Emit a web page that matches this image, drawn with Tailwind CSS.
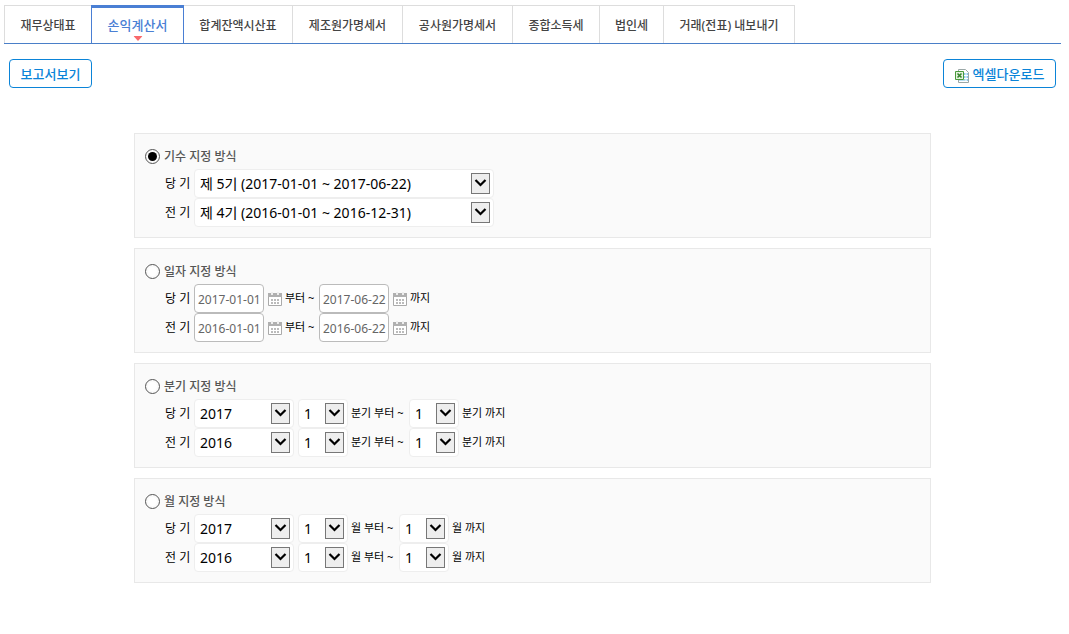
<!DOCTYPE html>
<html lang="ko">
<head>
    <meta charset="UTF-8">
    <meta name="viewport" content="width=device-width, initial-scale=1.0">
    <title>손익계산서</title>
    <script src="https://cdn.jsdelivr.net/npm/@tailwindcss/browser@4"></script>
</head>
<body class="bg-white pt-[5px] pl-1 pr-2 font-['Noto_Sans','Noto_Sans_CJK_KR',sans-serif] text-xs text-black">
    <svg class="hidden">
        <symbol id="arrow" viewBox="0 0 17 19">
            <path d="M3.5 6 L8.5 11 L13.5 6" fill="none" stroke="#000" stroke-width="2.2"/>
        </symbol>
        <symbol id="calendar" viewBox="0 0 14 14">
            <path d="M.5 1.5h13v12H.5z" fill="#fff" stroke="#aaa"/>
            <path d="M0 1h14v4H0z" fill="#b0b0b0"/>
            <path d="M3 0h2v3H3zM9 0h2v3H9z" fill="#eee"/>
            <path d="M3 7h2v2H3zM6 7h2v2H6zM9 7h2v2H9zM3 10h2v2H3zM6 10h2v2H6zM9 10h2v2H9z" fill="#bbb"/>
        </symbol>
    </svg>

    <!-- Tabs -->
    <nav class="flex h-[39px] border-b border-[#4a7fc8] font-medium text-[#444] whitespace-nowrap">
        <a href="#" class="flex w-[87px] items-center justify-center border-t border-l border-[#ddd] pt-0.5">재무상태표</a>
        <a href="#" class="relative flex w-[93px] items-center justify-center border-x border-t-3 border-[#4a7fd4] text-[13px] text-[#4a7fd4]">손익계산서
            <svg class="absolute bottom-[2px] left-1/2 -translate-x-1/2" width="9" height="5" viewBox="0 0 9 5"><path d="M0 0h9L4.5 5z" fill="#f9696b"/></svg>
        </a>
        <a href="#" class="flex w-[109px] items-center justify-center border-t border-r border-[#ddd] pt-0.5">합계잔액시산표</a>
        <a href="#" class="flex w-[110px] items-center justify-center border-t border-r border-[#ddd] pt-0.5">제조원가명세서</a>
        <a href="#" class="flex w-[110px] items-center justify-center border-t border-r border-[#ddd] pt-0.5">공사원가명세서</a>
        <a href="#" class="flex w-[87px] items-center justify-center border-t border-r border-[#ddd] pt-0.5">종합소득세</a>
        <a href="#" class="flex w-16 items-center justify-center border-t border-r border-[#ddd] pt-0.5">법인세</a>
        <a href="#" class="flex w-[131px] items-center justify-center border-t border-r border-[#ddd] pt-0.5">거래(전표) 내보내기</a>
    </nav>

    <!-- Buttons -->
    <div class="flex justify-between px-[5px] pt-[15px] text-[13px] font-medium text-[#0b84d8]">
        <button class="h-[29px] w-[83px] rounded border border-[#0b84d8] pt-0.5">보고서보기</button>
        <button class="flex h-[29px] w-[113px] items-center justify-center gap-1 rounded border border-[#0b84d8] pt-0.5">
            <svg class="mt-0.5" width="14" height="14" viewBox="0 0 14 14">
                <path d="M3.5.5h7l3 3v10h-10z" fill="#fff" stroke="#9aa7a7"/>
                <path d="M9 4h4v8H9z" fill="#8cc8ea"/>
                <path d="M4 12h8V11H4z" fill="#b9dff0"/>
                <path d="M9 6.5h4M9 9.5h4M11 4v8" stroke="#fff"/>
                <path d="M.5 2.5h8v8h-8z" fill="#e4f2dc" stroke="#4a9a3c"/>
                <path d="M2.5 4.5l4 4M6.5 4.5l-4 4" stroke="#35832b" stroke-width="1.6"/>
            </svg>
            엑셀다운로드
        </button>
    </div>

    <form class="mx-auto mt-[45px] flex max-w-[797px] flex-col gap-[10px]">
        <!-- 기수 -->
        <section class="border border-[#e8e8e8] bg-[#fafafa] p-[10px]">
            <label class="flex h-[25px] items-center gap-1 font-medium text-[#555]">
                <input type="radio" name="method" checked class="size-[15px] appearance-none rounded-full border border-[#555] bg-white bg-clip-content p-[2px] checked:bg-black">기수 지정 방식
            </label>
            <div class="flex h-[29px] items-center pl-5">
                <label for="term1" class="w-[29px]">당 기</label>
                <span class="relative flex">
                    <select id="term1" class="h-[29px] w-[300px] appearance-none rounded border border-[#eee] bg-white pl-[5px] text-sm"><option>제 5기 (2017-01-01 ~ 2017-06-22)</option></select>
                    <svg class="pointer-events-none absolute top-1 right-1 h-[21px] w-[19px] border border-[#777] bg-[#eee]"><use href="#arrow"/></svg>
                </span>
            </div>
            <div class="flex h-[29px] items-center pl-5">
                <label for="term2" class="w-[29px]">전 기</label>
                <span class="relative flex">
                    <select id="term2" class="h-[29px] w-[300px] appearance-none rounded border border-[#eee] bg-white pl-[5px] text-sm"><option>제 4기 (2016-01-01 ~ 2016-12-31)</option></select>
                    <svg class="pointer-events-none absolute top-1 right-1 h-[21px] w-[19px] border border-[#777] bg-[#eee]"><use href="#arrow"/></svg>
                </span>
            </div>
        </section>

        <!-- 일자 -->
        <section class="border border-[#e8e8e8] bg-[#fafafa] p-[10px]">
            <label class="flex h-[25px] items-center gap-1 font-medium text-[#555]">
                <input type="radio" name="method" class="size-[15px] appearance-none rounded-full border border-[#555] bg-white bg-clip-content p-[2px] checked:bg-black">일자 지정 방식
            </label>
            <div class="flex h-[29px] items-center pl-5">
                <label for="from1" class="w-[29px]">당 기</label>
                <input id="from1" type="text" value="2017-01-01" class="h-[29px] w-[70px] rounded border border-[#bbb] bg-white pt-0.5 pl-[3px] text-[#666]">
                <button type="button" aria-label="달력" class="mr-[3px] ml-1"><svg width="14" height="14"><use href="#calendar"/></svg></button>
                <label for="to1" class="w-[34px] text-[11px]">부터 ~</label>
                <input id="to1" type="text" value="2017-06-22" class="h-[29px] w-[70px] rounded border border-[#bbb] bg-white pt-0.5 pl-[3px] text-[#666]">
                <button type="button" aria-label="달력" class="mr-[3px] ml-1"><svg width="14" height="14"><use href="#calendar"/></svg></button>
                <span class="text-[11px]">까지</span>
            </div>
            <div class="flex h-[29px] items-center pl-5">
                <label for="from2" class="w-[29px]">전 기</label>
                <input id="from2" type="text" value="2016-01-01" class="h-[29px] w-[70px] rounded border border-[#bbb] bg-white pt-0.5 pl-[3px] text-[#666]">
                <button type="button" aria-label="달력" class="mr-[3px] ml-1"><svg width="14" height="14"><use href="#calendar"/></svg></button>
                <label for="to2" class="w-[34px] text-[11px]">부터 ~</label>
                <input id="to2" type="text" value="2016-06-22" class="h-[29px] w-[70px] rounded border border-[#bbb] bg-white pt-0.5 pl-[3px] text-[#666]">
                <button type="button" aria-label="달력" class="mr-[3px] ml-1"><svg width="14" height="14"><use href="#calendar"/></svg></button>
                <span class="text-[11px]">까지</span>
            </div>
        </section>

        <!-- 분기 -->
        <section class="border border-[#e8e8e8] bg-[#fafafa] p-[10px]">
            <label class="flex h-[25px] items-center gap-1 font-medium text-[#555]">
                <input type="radio" name="method" class="size-[15px] appearance-none rounded-full border border-[#555] bg-white bg-clip-content p-[2px] checked:bg-black">분기 지정 방식
            </label>
            <div class="flex h-[29px] items-center pl-5">
                <label for="qyear1" class="w-[29px]">당 기</label>
                <span class="relative mr-1 flex">
                    <select id="qyear1" class="h-[29px] w-[100px] appearance-none rounded border border-[#eee] bg-white pl-[5px] text-sm"><option>2017</option></select>
                    <svg class="pointer-events-none absolute top-1 right-1 h-[21px] w-[19px] border border-[#777] bg-[#eee]"><use href="#arrow"/></svg>
                </span>
                <span class="relative mr-[3px] flex">
                    <select id="qfrom1" class="h-[29px] w-[50px] appearance-none rounded border border-[#eee] bg-white pl-[5px] text-sm"><option>1</option></select>
                    <svg class="pointer-events-none absolute top-1 right-1 h-[21px] w-[19px] border border-[#777] bg-[#eee]"><use href="#arrow"/></svg>
                </span>
                <label for="qfrom1" class="w-[58px] text-[11px]">분기 부터 ~</label>
                <span class="relative mr-[3px] flex">
                    <select id="qto1" class="h-[29px] w-[50px] appearance-none rounded border border-[#eee] bg-white pl-[5px] text-sm"><option>1</option></select>
                    <svg class="pointer-events-none absolute top-1 right-1 h-[21px] w-[19px] border border-[#777] bg-[#eee]"><use href="#arrow"/></svg>
                </span>
                <label for="qto1" class="text-[11px]">분기 까지</label>
            </div>
            <div class="flex h-[29px] items-center pl-5">
                <label for="qyear2" class="w-[29px]">전 기</label>
                <span class="relative mr-1 flex">
                    <select id="qyear2" class="h-[29px] w-[100px] appearance-none rounded border border-[#eee] bg-white pl-[5px] text-sm"><option>2016</option></select>
                    <svg class="pointer-events-none absolute top-1 right-1 h-[21px] w-[19px] border border-[#777] bg-[#eee]"><use href="#arrow"/></svg>
                </span>
                <span class="relative mr-[3px] flex">
                    <select id="qfrom2" class="h-[29px] w-[50px] appearance-none rounded border border-[#eee] bg-white pl-[5px] text-sm"><option>1</option></select>
                    <svg class="pointer-events-none absolute top-1 right-1 h-[21px] w-[19px] border border-[#777] bg-[#eee]"><use href="#arrow"/></svg>
                </span>
                <label for="qfrom2" class="w-[58px] text-[11px]">분기 부터 ~</label>
                <span class="relative mr-[3px] flex">
                    <select id="qto2" class="h-[29px] w-[50px] appearance-none rounded border border-[#eee] bg-white pl-[5px] text-sm"><option>1</option></select>
                    <svg class="pointer-events-none absolute top-1 right-1 h-[21px] w-[19px] border border-[#777] bg-[#eee]"><use href="#arrow"/></svg>
                </span>
                <label for="qto2" class="text-[11px]">분기 까지</label>
            </div>
        </section>

        <!-- 월 -->
        <section class="border border-[#e8e8e8] bg-[#fafafa] p-[10px]">
            <label class="flex h-[25px] items-center gap-1 font-medium text-[#555]">
                <input type="radio" name="method" class="size-[15px] appearance-none rounded-full border border-[#555] bg-white bg-clip-content p-[2px] checked:bg-black">월 지정 방식
            </label>
            <div class="flex h-[29px] items-center pl-5">
                <label for="myear1" class="w-[29px]">당 기</label>
                <span class="relative mr-1 flex">
                    <select id="myear1" class="h-[29px] w-[100px] appearance-none rounded border border-[#eee] bg-white pl-[5px] text-sm"><option>2017</option></select>
                    <svg class="pointer-events-none absolute top-1 right-1 h-[21px] w-[19px] border border-[#777] bg-[#eee]"><use href="#arrow"/></svg>
                </span>
                <span class="relative mr-[3px] flex">
                    <select id="mfrom1" class="h-[29px] w-[50px] appearance-none rounded border border-[#eee] bg-white pl-[5px] text-sm"><option>1</option></select>
                    <svg class="pointer-events-none absolute top-1 right-1 h-[21px] w-[19px] border border-[#777] bg-[#eee]"><use href="#arrow"/></svg>
                </span>
                <label for="mfrom1" class="w-12 text-[11px]">월 부터 ~</label>
                <span class="relative mr-[3px] flex">
                    <select id="mto1" class="h-[29px] w-[50px] appearance-none rounded border border-[#eee] bg-white pl-[5px] text-sm"><option>1</option></select>
                    <svg class="pointer-events-none absolute top-1 right-1 h-[21px] w-[19px] border border-[#777] bg-[#eee]"><use href="#arrow"/></svg>
                </span>
                <label for="mto1" class="text-[11px]">월 까지</label>
            </div>
            <div class="flex h-[29px] items-center pl-5">
                <label for="myear2" class="w-[29px]">전 기</label>
                <span class="relative mr-1 flex">
                    <select id="myear2" class="h-[29px] w-[100px] appearance-none rounded border border-[#eee] bg-white pl-[5px] text-sm"><option>2016</option></select>
                    <svg class="pointer-events-none absolute top-1 right-1 h-[21px] w-[19px] border border-[#777] bg-[#eee]"><use href="#arrow"/></svg>
                </span>
                <span class="relative mr-[3px] flex">
                    <select id="mfrom2" class="h-[29px] w-[50px] appearance-none rounded border border-[#eee] bg-white pl-[5px] text-sm"><option>1</option></select>
                    <svg class="pointer-events-none absolute top-1 right-1 h-[21px] w-[19px] border border-[#777] bg-[#eee]"><use href="#arrow"/></svg>
                </span>
                <label for="mfrom2" class="w-12 text-[11px]">월 부터 ~</label>
                <span class="relative mr-[3px] flex">
                    <select id="mto2" class="h-[29px] w-[50px] appearance-none rounded border border-[#eee] bg-white pl-[5px] text-sm"><option>1</option></select>
                    <svg class="pointer-events-none absolute top-1 right-1 h-[21px] w-[19px] border border-[#777] bg-[#eee]"><use href="#arrow"/></svg>
                </span>
                <label for="mto2" class="text-[11px]">월 까지</label>
            </div>
        </section>
    </form>
</body>
</html>
